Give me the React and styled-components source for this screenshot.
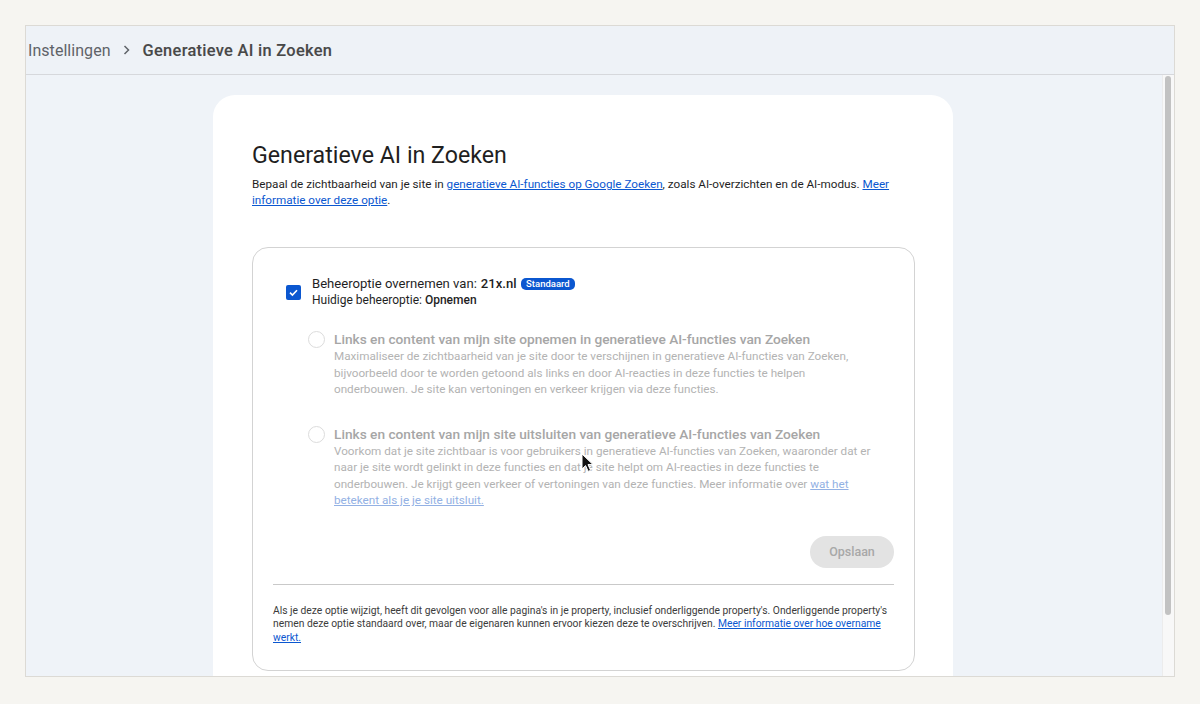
import React from "react";
import styled, { createGlobalStyle } from "styled-components";

const Global = createGlobalStyle`
  html, body { margin: 0; padding: 0; }
  body {
    background: #f6f5f1;
    font-family: Roboto, "Liberation Sans", Arial, sans-serif;
    color: #1f1f1f;
    -webkit-font-smoothing: antialiased;
  }
  * { box-sizing: border-box; }
`;

const Page = styled.div`
  width: 1200px;
  height: 704px;
  padding: 25px 25px 27px 25px;
  background: #f6f5f1;
`;

const Frame = styled.div`
  position: relative;
  width: 1150px;
  height: 652px;
  border: 1px solid #dcdad5;
  display: flex;
  flex-direction: column;
  overflow: hidden;
  background: #eff3f8;
`;

const Header = styled.div`
  height: 49px;
  flex: none;
  display: flex;
  align-items: center;
  padding-left: 2px;
  background: #eef2f7;
  border-bottom: 1px solid #d6d8dc;
  font-size: 16px;
`;

const Crumb = styled.span`
  color: ${(p) => (p.$current ? "#3a3a3a" : "#5f6368")};
  font-weight: ${(p) => (p.$current ? 500 : 400)};
  font-size: ${(p) => (p.$current ? "16.4px" : "16px")};
  letter-spacing: ${(p) => (p.$current ? "0.3px" : "0.05px")};
  -webkit-text-stroke: ${(p) => (p.$current ? "0.1px" : "0")};
  opacity: ${(p) => (p.$current ? 0.92 : 1)};
`;

const Chevron = styled.span`
  display: inline-flex;
  width: 32px;
  justify-content: center;
  color: #5f6368;
`;

const Body = styled.div`
  flex: 1;
  display: flex;
  min-height: 0;
`;

const Main = styled.div`
  flex: 1;
  padding: 20px 0 0 187px;
  overflow: hidden;
`;

const ScrollTrack = styled.div`
  width: 12px;
  flex: none;
  background: #f8f8f8;
  border-left: 1px solid #ececec;
  padding: 1px 2px 0 2px;
`;

const ScrollThumb = styled.div`
  height: 539px;
  width: 6px;
  border-radius: 3px;
  background: #c2c2c2;
`;

const Card = styled.div`
  width: 740px;
  background: #ffffff;
  border-radius: 22px;
  padding: 46px 38px 60px 39px;
`;

const Title = styled.h1`
  margin: 0;
  font-size: 23.2px;
  line-height: 28px;
  font-weight: 400;
  color: #1f1f1f;
`;

const Lead = styled.p`
  margin: 7px 0 0 0;
  font-size: 11.7px;
  line-height: 16px;
  color: #1f1f1f;
`;

const Link = styled.a`
  color: ${(p) => (p.$muted ? "#93b1e4" : "#0b57d0")};
  text-decoration: underline;
  text-underline-offset: 1px;
`;

const Box = styled.div`
  margin-top: 39px;
  border: 1px solid #d3d3d3;
  border-radius: 16px;
  padding: 27px 20px 26px 20px;
`;

const InheritRow = styled.div`
  display: flex;
  align-items: center;
  gap: 11px;
  padding-left: 13px;
`;

const Checkbox = styled.span`
  width: 15px;
  height: 15px;
  border-radius: 2px;
  background: #0b57d0;
  display: inline-flex;
  align-items: center;
  justify-content: center;
  flex: none;
`;

const InheritText = styled.div`
  display: flex;
  flex-direction: column;
`;

const InheritLine = styled.div`
  font-size: 13.1px;
  line-height: 17px;
  color: #1f1f1f;
  display: flex;
  align-items: center;
`;

const SubLine = styled.div`
  font-size: 12px;
  line-height: 17px;
  color: #1f1f1f;
`;

const Strong = styled.span`
  font-weight: 500;
  margin-left: ${(p) => (p.$tight ? "0" : "4px")};
`;

const Badge = styled.span`
  margin-left: 4px;
  background: #0b57d0;
  color: #fff;
  font-size: 9.5px;
  font-weight: 500;
  line-height: 12px;
  padding: 0 5.5px;
  border-radius: 5px;
`;

const Options = styled.div`
  display: flex;
  flex-direction: column;
  gap: 27px;
  margin-top: 21px;
  padding-left: 35px;
`;

const Option = styled.div`
  display: flex;
  gap: 9px;
  align-items: flex-start;
`;

const Radio = styled.span`
  width: 17px;
  height: 17px;
  border-radius: 50%;
  border: 1.5px solid #dcdcdc;
  flex: none;
  margin-top: 1px;
`;

const OptionText = styled.div`
  max-width: 545px;
`;

const OptionTitle = styled.div`
  font-size: 13.7px;
  line-height: 18px;
  font-weight: 500;
  color: #a6a6a6;
`;

const OptionDesc = styled.div`
  font-size: 11.7px;
  line-height: 16.5px;
  color: #b3b3b3;
`;

const Actions = styled.div`
  display: flex;
  justify-content: flex-end;
  margin-top: 27px;
`;

const SaveButton = styled.button`
  width: 84px;
  height: 32px;
  border: none;
  border-radius: 16px;
  background: #e3e3e3;
  color: #a8a8a8;
  font-family: inherit;
  font-size: 12.5px;
  font-weight: 500;
`;

const Divider = styled.hr`
  margin: 16px 0 0 0;
  border: none;
  border-top: 1px solid #c9c9c9;
`;

const Footnote = styled.p`
  margin: 19px 0 0 0;
  font-size: 10.3px;
  line-height: 13.5px;
  color: #3c3c3c;
`;

const Cursor = styled.svg`
  position: absolute;
  left: 555px;
  top: 427px;
  pointer-events: none;
`;

export default function App() {
  return (
    <>
      <Global />
      <Page>
        <Frame>
          <Header>
            <Crumb>Instellingen</Crumb>
            <Chevron>
              <svg width="9" height="12" viewBox="0 0 9 12">
                <path d="M2.5 2 L6.5 6 L2.5 10" fill="none" stroke="#5f6368" strokeWidth="1.5" />
              </svg>
            </Chevron>
            <Crumb $current>Generatieve AI in Zoeken</Crumb>
          </Header>
          <Body>
            <Main>
              <Card>
                <Title>Generatieve AI in Zoeken</Title>
                <Lead>
                  Bepaal de zichtbaarheid van je site in{" "}
                  <Link href="#">generatieve AI-functies op Google Zoeken</Link>, zoals AI-overzichten en de AI-modus.{" "}
                  <Link href="#">Meer informatie over deze optie</Link>.
                </Lead>
                <Box>
                  <InheritRow>
                    <Checkbox>
                      <svg width="11" height="11" viewBox="0 0 11 11">
                        <path d="M2 5.6 L4.4 8 L9 3.2" fill="none" stroke="#fff" strokeWidth="1.6" />
                      </svg>
                    </Checkbox>
                    <InheritText>
                      <InheritLine>
                        Beheeroptie overnemen van: <Strong>21x.nl</Strong>
                        <Badge>Standaard</Badge>
                      </InheritLine>
                      <SubLine>
                        Huidige beheeroptie: <Strong $tight>Opnemen</Strong>
                      </SubLine>
                    </InheritText>
                  </InheritRow>
                  <Options>
                    <Option>
                      <Radio />
                      <OptionText>
                        <OptionTitle>Links en content van mijn site opnemen in generatieve AI-functies van Zoeken</OptionTitle>
                        <OptionDesc>
                          Maximaliseer de zichtbaarheid van je site door te verschijnen in generatieve AI-functies van Zoeken,
                          bijvoorbeeld door te worden getoond als links en door AI-reacties in deze functies te helpen
                          onderbouwen. Je site kan vertoningen en verkeer krijgen via deze functies.
                        </OptionDesc>
                      </OptionText>
                    </Option>
                    <Option>
                      <Radio />
                      <OptionText>
                        <OptionTitle>Links en content van mijn site uitsluiten van generatieve AI-functies van Zoeken</OptionTitle>
                        <OptionDesc>
                          Voorkom dat je site zichtbaar is voor gebruikers in generatieve AI-functies van Zoeken, waaronder dat er
                          naar je site wordt gelinkt in deze functies en dat je site helpt om AI-reacties in deze functies te
                          onderbouwen. Je krijgt geen verkeer of vertoningen van deze functies. Meer informatie over{" "}
                          <Link $muted href="#">wat het betekent als je je site uitsluit.</Link>
                        </OptionDesc>
                      </OptionText>
                    </Option>
                  </Options>
                  <Actions>
                    <SaveButton disabled>Opslaan</SaveButton>
                  </Actions>
                  <Divider />
                  <Footnote>
                    Als je deze optie wijzigt, heeft dit gevolgen voor alle pagina's in je property, inclusief onderliggende property's. Onderliggende property's
                    nemen deze optie standaard over, maar de eigenaren kunnen ervoor kiezen deze te overschrijven.{" "}
                    <Link href="#">Meer informatie over hoe overname werkt.</Link>
                  </Footnote>
                </Box>
              </Card>
            </Main>
            <ScrollTrack>
              <ScrollThumb />
            </ScrollTrack>
          </Body>
          <Cursor width="14" height="20" viewBox="0 0 14 20">
            <path d="M1 1 L1 16 L4.6 12.6 L7.2 18.4 L9.6 17.3 L7 11.6 L12 11.6 Z" fill="#111" stroke="#fff" strokeWidth="1" />
          </Cursor>
        </Frame>
      </Page>
    </>
  );
}
